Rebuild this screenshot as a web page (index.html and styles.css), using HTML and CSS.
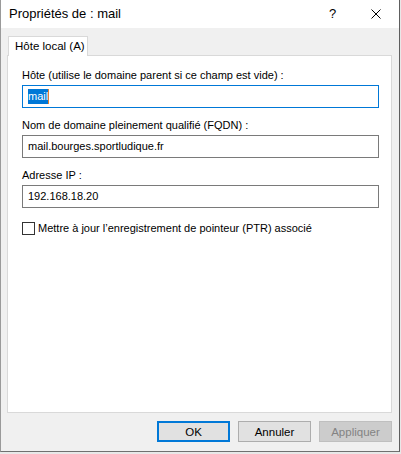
FILE: index.html
```html
<!DOCTYPE html>
<html lang="fr">
<head>
<meta charset="utf-8">
<title>Propriétés de : mail</title>
<link rel="stylesheet" href="styles.css">
</head>
<body>
<div class="window">
  <div class="titlebar">
    <span class="title">Propriétés de : mail</span>
    <span class="help">?</span>
    <span class="close">
      <svg width="10" height="10" viewBox="0 0 10 10"><path d="M0.5 0.5 L9.5 9.5 M9.5 0.5 L0.5 9.5" stroke="#000" stroke-width="1" fill="none"/></svg>
    </span>
  </div>
  <div class="body">
    <div class="tabs">
      <div class="tab">Hôte local (A)</div>
    </div>
    <div class="panel">
      <div class="field">
        <label class="label">Hôte (utilise le domaine parent si ce champ est vide) :</label>
        <div class="input focused"><span class="sel">mail</span><span class="caret"></span></div>
      </div>
      <div class="field">
        <label class="label">Nom de domaine pleinement qualifié (FQDN) :</label>
        <div class="input">mail.bourges.sportludique.fr</div>
      </div>
      <div class="field">
        <label class="label">Adresse IP :</label>
        <div class="input">192.168.18.20</div>
      </div>
      <div class="check">
        <span class="box"></span>
        <span class="check-label">Mettre à jour l’enregistrement de pointeur (PTR) associé</span>
      </div>
    </div>
    <div class="footer">
      <button class="btn default">OK</button>
      <button class="btn">Annuler</button>
      <button class="btn disabled">Appliquer</button>
    </div>
  </div>
</div>
</body>
</html>
```

FILE: styles.css
```css
* { box-sizing: border-box; }
html, body {
  margin: 0;
  padding: 0;
  background: #e8e8e8;
}
body {
  font-family: "Segoe UI", "Liberation Sans", Arial, sans-serif;
  font-size: 11px;
  color: #000;
  width: 401px;
  height: 454px;
  overflow: hidden;
}
.window {
  width: 400px;
  height: 452px;
  background: #f0f0f0;
  border-left: 1px solid #9a9a9a;
  border-right: 1px solid #5e5e5e;
  border-bottom: 1px solid #707070;
  display: flex;
  flex-direction: column;
}
.titlebar {
  height: 28px;
  background: #fff;
  display: flex;
  align-items: center;
  padding-left: 8px;
}
.title {
  flex: 1;
  font-size: 13px;
  line-height: 16px;
}
.help {
  width: 8px;
  font-size: 13px;
  line-height: 16px;
  margin-right: 34px;
}
.close {
  width: 10px;
  height: 10px;
  margin-right: 18px;
  display: flex;
}
.body {
  flex: 1;
  padding: 7px 7px 0 6px;
  display: flex;
  flex-direction: column;
}
.tabs {
  display: flex;
  height: 20px;
  padding-left: 1px;
}
.tab {
  background: #fff;
  border: 1px solid #d9d9d9;
  border-bottom: none;
  padding: 0 6px;
  line-height: 19px;
  width: 80px;
  white-space: nowrap;
  font-size: 11.5px;
  position: relative;
  top: 1px;
  z-index: 1;
}
.panel {
  height: 358px;
  background: #fff;
  border: 1px solid #d9d9d9;
  padding: 11px 11px 0 14px;
  display: flex;
  flex-direction: column;
}
.field {
  display: flex;
  flex-direction: column;
  margin-bottom: 9px;
}
.label {
  line-height: 16px;
  margin-bottom: 2px;
}
.input {
  height: 23px;
  width: 357px;
  border: 1px solid #7a7a7a;
  padding: 0 5px;
  line-height: 21px;
  display: flex;
  align-items: center;
}
.input.focused {
  border-color: #0078d7;
}
.sel {
  background: #0078d7;
  color: #fff;
  line-height: 15px;
}
.caret {
  width: 1px;
  height: 15px;
  background: #e08030;
}
.check {
  display: flex;
  align-items: center;
  margin-top: 3px;
}
.box {
  width: 13px;
  height: 13px;
  border: 1px solid #333;
  background: #fff;
  margin-right: 3px;
}
.check-label {
  line-height: 16px;
}
.footer {
  display: flex;
  justify-content: flex-end;
  gap: 8px;
  padding-top: 8px;
}
.btn {
  font-family: inherit;
  font-size: 11.5px;
  width: 73px;
  height: 21px;
  background: #e1e1e1;
  border: 1px solid #adadad;
  color: #000;
  padding: 0;
  margin: 0;
}
.btn.default {
  border: 2px solid #0078d7;
}
.btn.disabled {
  background: #cccccc;
  border-color: #bfbfbf;
  color: #838383;
}
```
